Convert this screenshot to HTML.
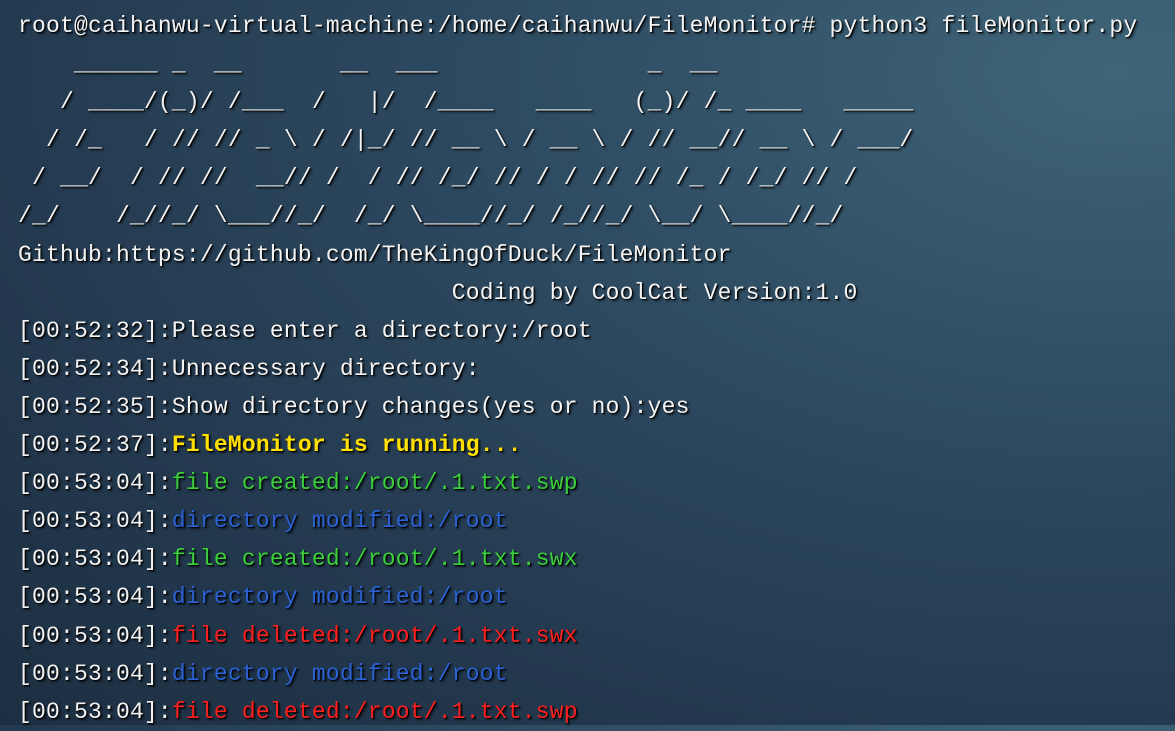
<!DOCTYPE html>
<html><head><meta charset="utf-8"><style>
html,body{margin:0;padding:0;width:1175px;height:725px;overflow:hidden;}
body{background:radial-gradient(ellipse at 95% 10%,#3f6478 0%,#2f4d63 35%,#243a50 70%,#1d2f42 100%);}
pre{margin:0;position:absolute;left:18px;top:7px;font-family:"Liberation Mono",monospace;font-size:23px;line-height:38.1px;color:#f4f4f4;text-shadow:1px 1px 1px #000,2px 2px 2px rgba(0,0,0,.6);letter-spacing:0.19px;}
.y{color:#ffe000;font-weight:bold}
.g{color:#3ccf3c}
.b{color:#2c62d4}
.r{color:#ff1f1f}
</style></head><body><pre>root@caihanwu-virtual-machine:/home/caihanwu/FileMonitor# python3 fileMonitor.py
    ______ _  __       __  ___               _  __
   / ____/(_)/ /___  /   |/  /____   ____   (_)/ /_ ____   _____
  / /_   / // // _ \ / /|_/ // __ \ / __ \ / // __// __ \ / ___/
 / __/  / // //  __// /  / // /_/ // / / // // /_ / /_/ // /
/_/    /_//_/ \___//_/  /_/ \____//_/ /_//_/ \__/ \____//_/
Github:https://github.com/TheKingOfDuck/FileMonitor
                               Coding by CoolCat Version:1.0
[00:52:32]:Please enter a directory:/root
[00:52:34]:Unnecessary directory:
[00:52:35]:Show directory changes(yes or no):yes
[00:52:37]:<span class="y">FileMonitor is running...</span>
[00:53:04]:<span class="g">file created:/root/.1.txt.swp</span>
[00:53:04]:<span class="b">directory modified:/root</span>
[00:53:04]:<span class="g">file created:/root/.1.txt.swx</span>
[00:53:04]:<span class="b">directory modified:/root</span>
[00:53:04]:<span class="r">file deleted:/root/.1.txt.swx</span>
[00:53:04]:<span class="b">directory modified:/root</span>
[00:53:04]:<span class="r">file deleted:/root/.1.txt.swp</span></pre></body></html>
